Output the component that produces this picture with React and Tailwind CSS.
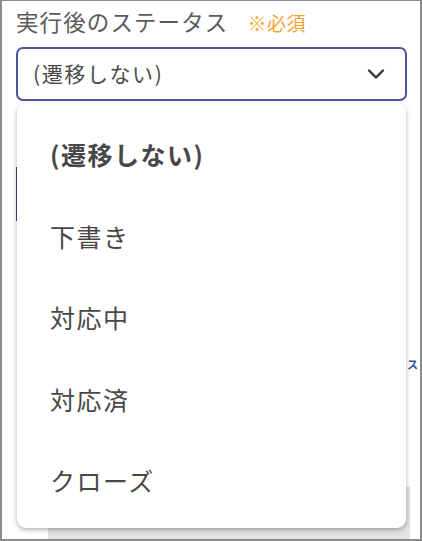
import React from "react";
import { ChevronDown } from "lucide-react";

const options = ["(遷移しない)", "下書き", "対応中", "対応済", "クローズ"];

const font = {
  fontFamily: '"Noto Sans CJK JP", "Noto Sans", sans-serif',
};

const App = () => {
  return (
    <div
      className="relative w-[422px] h-[541px] bg-white border-2 border-t border-[#8c8c8c] overflow-hidden"
      style={font}
    >
      {/* page under the open menu */}
      <div className="flex flex-col h-full pl-[14px] pr-[10px]">
        <div className="flex items-baseline gap-[19px] pt-[4px] h-[46px]">
          <span className="text-[22.5px] text-[#5b5b5b] tracking-[1.1px]">
            実行後のステータス
          </span>
          <span className="text-[19px] text-[#f5a32e] tracking-[0.5px]">※必須</span>
        </div>
        <div className="flex items-center justify-between h-[54px] w-[391px] border-2 border-[#4f5499] rounded-[7px] pl-[15px] pr-[15px]">
          <span className="text-[21px] text-[#4a4a4a] tracking-[1.6px]">(遷移しない)</span>
          <ChevronDown size={28} strokeWidth={2} className="text-[#333]" />
        </div>
        <div className="mt-[66px] h-[54px] w-[2px] bg-[#3d4591]" />
        <div className="flex justify-end mt-[135px] pr-0">
          <span className="text-[11px] font-bold text-[#2a4f9a] -mr-[8px]">ァス</span>
        </div>
        <div className="mt-auto ml-[32px] h-[52px] bg-[#e2e2e2]" />
      </div>

      {/* open dropdown menu */}
      <div className="absolute left-[15px] top-[102px] w-[389px] h-[425px] bg-white rounded-[9px] shadow-[0_2px_5px_rgba(0,0,0,0.3)] pt-[11px] pb-[7px]">
        {options.map((opt, i) => (
          <div
            key={opt}
            className={`flex items-center h-[81.5px] pl-[33px] text-[25px] text-[#474747] tracking-[1.5px] ${
              i === 0 ? "font-bold" : ""
            }`}
          >
            {opt}
          </div>
        ))}
      </div>
    </div>
  );
};

export default App;
